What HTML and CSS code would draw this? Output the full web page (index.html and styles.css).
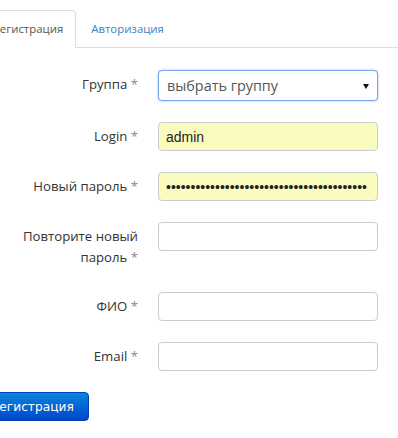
FILE: index.html
```html
<!DOCTYPE html>
<html lang="ru">
<head>
  <meta charset="UTF-8" />
  <meta name="viewport" content="width=device-width, initial-scale=1.0"/>
  <title>Регистрация</title>
  <link rel="stylesheet" href="styles.css">
</head>
<body>

<div class="page">
  <ul class="tabs">
    <li class="active"><a href="#">Регистрация</a></li>
    <li><a href="#">Авторизация</a></li>
  </ul>

  <form class="form" onsubmit="return false">
    <div class="row">
      <label class="label">Группа <span class="req">*</span></label>
      <div class="select focused">
        <span>выбрать группу</span>
        <span class="caret"></span>
      </div>
    </div>

    <div class="row">
      <label class="label" for="login">Login <span class="req">*</span></label>
      <input class="input filled" id="login" type="text" value="admin">
    </div>

    <div class="row">
      <label class="label" for="pass">Новый пароль <span class="req">*</span></label>
      <input class="input filled" id="pass" type="password" value="aaaaaaaaaaaaaaaaaaaaaaaaaaaaaaaaaaaaaaaaa">
    </div>

    <div class="row row-tall">
      <label class="label" for="pass2">Повторите новый пароль <span class="req">*</span></label>
      <input class="input" id="pass2" type="password">
    </div>

    <div class="row">
      <label class="label" for="fio">ФИО <span class="req">*</span></label>
      <input class="input" id="fio" type="text">
    </div>

    <div class="row">
      <label class="label" for="email">Email <span class="req">*</span></label>
      <input class="input" id="email" type="text">
    </div>

    <button class="btn-primary" type="submit">Регистрация</button>
  </form>
</div>

</body>
</html>
```

FILE: styles.css
```css
body {
  margin: 0;
  padding: 0;
  background: #fff;
  color: #333;
  font-family: "Open Sans", Arial, sans-serif;
  overflow: hidden;
}

.page {
  margin-left: -20px;
  width: 418px;
  padding-top: 10px;
}

.tabs {
  list-style: none;
  margin: 0;
  padding: 0;
  display: flex;
  border-bottom: 1px solid #ddd;
}

.tabs li {
  margin-bottom: -1px;
  margin-right: 2px;
}

.tabs a {
  display: block;
  padding: 8px 12px;
  line-height: 20px;
  font-size: 11.4px;
  color: #3f7fc6;
  text-decoration: none;
  border: 1px solid transparent;
  border-radius: 4px 4px 0 0;
}

.tabs li.active a {
  color: #555;
  background: #fff;
  border-color: #ddd #ddd transparent;
}

.form {
  padding-top: 22px;
}

.row {
  display: grid;
  grid-template-columns: 158px 220px;
  column-gap: 20px;
  align-items: start;
  margin-bottom: 21px;
}

.row-tall {
  margin-bottom: 24px;
}

.label {
  text-align: right;
  font-size: 13.2px;
  line-height: 21px;
  padding-top: 4px;
  color: #333;
}

.req {
  color: #8a8a8a;
}

.input {
  box-sizing: border-box;
  width: 220px;
  height: 29px;
  margin: 0;
  padding: 4px 7px;
  border: 1px solid #ccc;
  border-radius: 4px;
  font-family: "Liberation Sans", Arial, sans-serif;
  font-size: 14px;
  color: #222;
  background: #fff;
  outline: none;
}

.input.filled {
  background: #fafcbf;
}

.select {
  box-sizing: border-box;
  width: 220px;
  height: 31px;
  display: flex;
  align-items: center;
  justify-content: space-between;
  padding: 0 8px 0 8px;
  border: 1px solid #ccc;
  border-radius: 4px;
  font-size: 14.4px;
  color: #555;
  background: #fff;
}

.select.focused {
  border-color: #7aa7ee;
  box-shadow: 0 0 2px rgba(82, 140, 236, 0.7);
}

.caret {
  width: 0;
  height: 0;
  border-left: 3px solid transparent;
  border-right: 3px solid transparent;
  border-top: 5px solid #111;
  margin-top: 1px;
}

.btn-primary {
  display: block;
  height: 29px;
  padding: 0 14px 0 11px;
  border: 1px solid #0042b8;
  border-radius: 4px;
  background: linear-gradient(#0a84dc, #0046cc);
  color: #fff;
  font-family: "DejaVu Sans", Tahoma, sans-serif;
  font-size: 12.2px;
  cursor: pointer;
}
```
